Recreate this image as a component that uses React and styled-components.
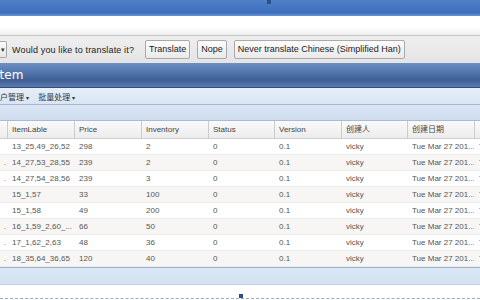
import React from 'react'
import styled, { createGlobalStyle } from 'styled-components'

const GlobalStyle = createGlobalStyle`
  html, body {
    margin: 0;
    padding: 0;
    background: #ffffff;
  }
  body {
    width: 480px;
    height: 300px;
    overflow: hidden;
    font-family: "Liberation Sans", "Noto Sans CJK SC", sans-serif;
  }
`

const columns = [
  { key: 'id', title: '' },
  { key: 'label', title: 'ItemLable' },
  { key: 'price', title: 'Price' },
  { key: 'inventory', title: 'Inventory' },
  { key: 'status', title: 'Status' },
  { key: 'version', title: 'Version' },
  { key: 'creator', title: '创建人' },
  { key: 'created', title: '创建日期' },
  { key: 'updated', title: '' },
]

const rows = [
  { id: '', label: '13_25,49_26,52', price: '298', inventory: '2' },
  { id: '.', label: '14_27,53_28,55', price: '239', inventory: '2' },
  { id: '.', label: '14_27,54_28,56', price: '239', inventory: '3' },
  { id: '', label: '15_1,57', price: '33', inventory: '100' },
  { id: '', label: '15_1,58', price: '49', inventory: '200' },
  { id: '.', label: '16_1,59_2,60_...', price: '66', inventory: '50' },
  { id: '.', label: '17_1,62_2,63', price: '48', inventory: '36' },
  { id: '.', label: '18_35,64_36,65', price: '120', inventory: '40' },
]

const gridCols = '7px 67px 67px 67px 66px 67px 66px 67px 1fr'

function App() {
  return (
    <Page>
      <GlobalStyle />
      <TopBar>
        <Handle $left={267} />
      </TopBar>
      <AddressBand />
      <TranslateBar>
        <DropButton>▾</DropButton>
        <Prompt>Would you like to translate it?</Prompt>
        <BarButton>Translate</BarButton>
        <BarButton>Nope</BarButton>
        <BarButton>Never translate Chinese (Simplified Han)</BarButton>
      </TranslateBar>
      <TitleBar>
        <Title>Item</Title>
      </TitleBar>
      <MenuBar>
        <MenuItem>户管理 <Caret>▾</Caret></MenuItem>
        <MenuItem>批量处理 <Caret>▾</Caret></MenuItem>
      </MenuBar>
      <Strip />
      <Grid>
        <HeaderRow>
          {columns.map((c) => (
            <HeaderCell key={c.key}>{c.title}</HeaderCell>
          ))}
        </HeaderRow>
        {rows.map((r, i) => (
          <Row key={i} $alt={i % 2 === 1}>
            <Cell>{r.id}</Cell>
            <Cell>{r.label}</Cell>
            <Cell>{r.price}</Cell>
            <Cell>{r.inventory}</Cell>
            <Cell>0</Cell>
            <Cell>0.1</Cell>
            <Cell>vicky</Cell>
            <Cell>Tue Mar 27 201...</Cell>
            <Cell>Tue Mar 27 2012</Cell>
          </Row>
        ))}
      </Grid>
      <FooterBand />
      <DesignArea>
        <Handle $left={239} $bottom />
      </DesignArea>
    </Page>
  )
}

export default App

const Page = styled.div`
  position: relative;
  width: 480px;
  height: 300px;
  overflow: hidden;
`

const TopBar = styled.div`
  position: relative;
  height: 16px;
  background: linear-gradient(#4f80c8, #3d6fbd 80%, #6a94d2);
`

const Handle = styled.div`
  position: absolute;
  left: ${(p) => p.$left}px;
  ${(p) => (p.$bottom ? 'bottom: 0;' : 'top: 0;')}
  width: 4px;
  height: 4px;
  background: #2b4f8a;
`

const AddressBand = styled.div`
  height: 19px;
  background: linear-gradient(#ffffff, #ffffff 60%, #eeeeee);
  border-bottom: 1px solid #c6c6c6;
`

const TranslateBar = styled.div`
  height: 27px;
  display: flex;
  align-items: center;
  gap: 7px;
  background: linear-gradient(#efefef, #e4e4e4);
  font-size: 9px;
  color: #222;
`

const DropButton = styled.div`
  width: 7px;
  height: 17px;
  box-sizing: border-box;
  border: 1px solid #a8a8a8;
  border-left: none;
  border-radius: 0 2px 2px 0;
  background: linear-gradient(#fbfbfb, #e6e6e6);
  font-size: 7px;
  line-height: 15px;
  text-align: right;
  padding-right: 1px;
  color: #333;
`

const Prompt = styled.span`
  margin-left: -2px;
  margin-right: 4px;
  letter-spacing: 0.15px;
`

const BarButton = styled.div`
  height: 19px;
  box-sizing: border-box;
  padding: 0 3px;
  line-height: 17px;
  border: 1px solid #a9a9a9;
  border-radius: 2px;
  background: linear-gradient(#fdfdfd, #e9e9e9);
  white-space: nowrap;
`

const TitleBar = styled.div`
  height: 24px;
  display: flex;
  align-items: center;
  background: linear-gradient(#6d8fc4, #4f72ab 45%, #3f5f95 70%, #5a7bb0);
  border-bottom: 1px solid #2f4c7c;
`

const Title = styled.span`
  color: #ffffff;
  font-size: 12px;
  text-indent: -4px;
  font-family: "DejaVu Sans", "Liberation Sans", sans-serif;
`

const MenuBar = styled.div`
  height: 16px;
  display: flex;
  align-items: center;
  gap: 9px;
  background: linear-gradient(#e6eef9, #d9e5f4);
  border-bottom: 1px solid #a6b6cc;
  font-size: 8px;
  color: #333;
`

const MenuItem = styled.span`
  white-space: nowrap;
`

const Caret = styled.span`
  font-size: 6px;
`

const Strip = styled.div`
  height: 15px;
  background: linear-gradient(#d9e5f4, #cfdcee);
  border-bottom: 1px solid #aabbd3;
`

const Grid = styled.div`
  border-bottom: 1px solid #99b0cf;
`

const HeaderRow = styled.div`
  display: grid;
  grid-template-columns: ${gridCols};
  height: 17px;
  background: linear-gradient(#fafafa, #ececec);
  border-bottom: 1px solid #cfcfcf;
`

const HeaderCell = styled.div`
  border-left: 1px solid #cccccc;
  padding-left: 4px;
  font-size: 8px;
  line-height: 17px;
  color: #444;
  white-space: nowrap;
  overflow: hidden;
  &:first-child {
    border-left: none;
  }
`

const Row = styled.div`
  display: grid;
  grid-template-columns: ${gridCols};
  height: 15px;
  background: ${(p) => (p.$alt ? '#f8f6f4' : '#ffffff')};
  border-bottom: 1px solid #ececec;
`

const Cell = styled.div`
  padding-left: 5px;
  font-size: 8px;
  line-height: 15px;
  color: #555;
  white-space: nowrap;
  overflow: hidden;
  &:first-child {
    padding-left: 0;
    text-align: right;
    padding-right: 1px;
  }
`

const FooterBand = styled.div`
  height: 16px;
  background: linear-gradient(#dbe7f5, #d3e1f2);
  border-bottom: 1px solid #c2d2e6;
`

const DesignArea = styled.div`
  position: relative;
  height: 13px;
  border-bottom: 1px dashed #9aaac0;
`
